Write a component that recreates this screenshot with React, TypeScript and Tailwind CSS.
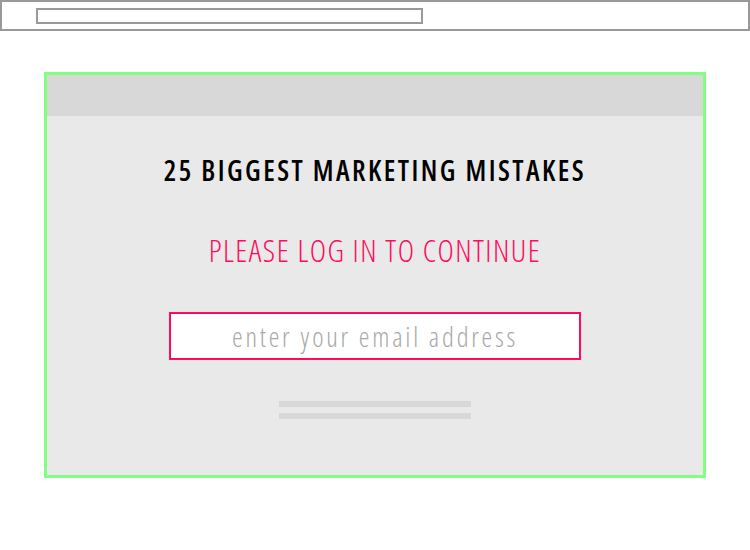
export default function App() {
  const font = { fontFamily: '"Open Sans", "DejaVu Sans Condensed", sans-serif' };
  return (
    <div className="w-[750px] h-[550px] bg-white relative" style={font}>
      <div className="h-[31px] border-2 border-[#999999] pl-[34px] pt-[6px]">
        <div className="w-[387px] h-[16px] border-2 border-[#999999]" />
      </div>
      <div className="mt-[41px] mx-[44px] h-[406px] border-[3px] border-[#80ff80] bg-[#e9e9e9] flex flex-col">
        <div className="h-[41px] bg-[#d8d8d8]" />
        <div className="flex flex-col items-center">
          <h1 className="mt-[34px] text-[28px] leading-[40px] font-semibold font-stretch-condensed text-black tracking-[2.45px]">
            25 BIGGEST MARKETING MISTAKES
          </h1>
          <p className="mt-[40px] text-[31px] leading-[40px] font-light font-stretch-condensed text-[#ff0a5e] tracking-[1.45px]">
            PLEASE LOG IN TO CONTINUE
          </p>
          <div className="mt-[42px] w-[412px] h-[48px] border-2 border-[#ff0a5e] bg-white flex items-center justify-center">
            <span className="text-[27px] font-light font-stretch-condensed text-[#a8a8a8] leading-none tracking-[2.8px]">
              enter your email address
            </span>
          </div>
          <div className="mt-[41px] w-[192px] h-[6px] bg-[#d8d8d8]" />
          <div className="mt-[6px] w-[192px] h-[6px] bg-[#d8d8d8]" />
        </div>
      </div>
    </div>
  );
}
